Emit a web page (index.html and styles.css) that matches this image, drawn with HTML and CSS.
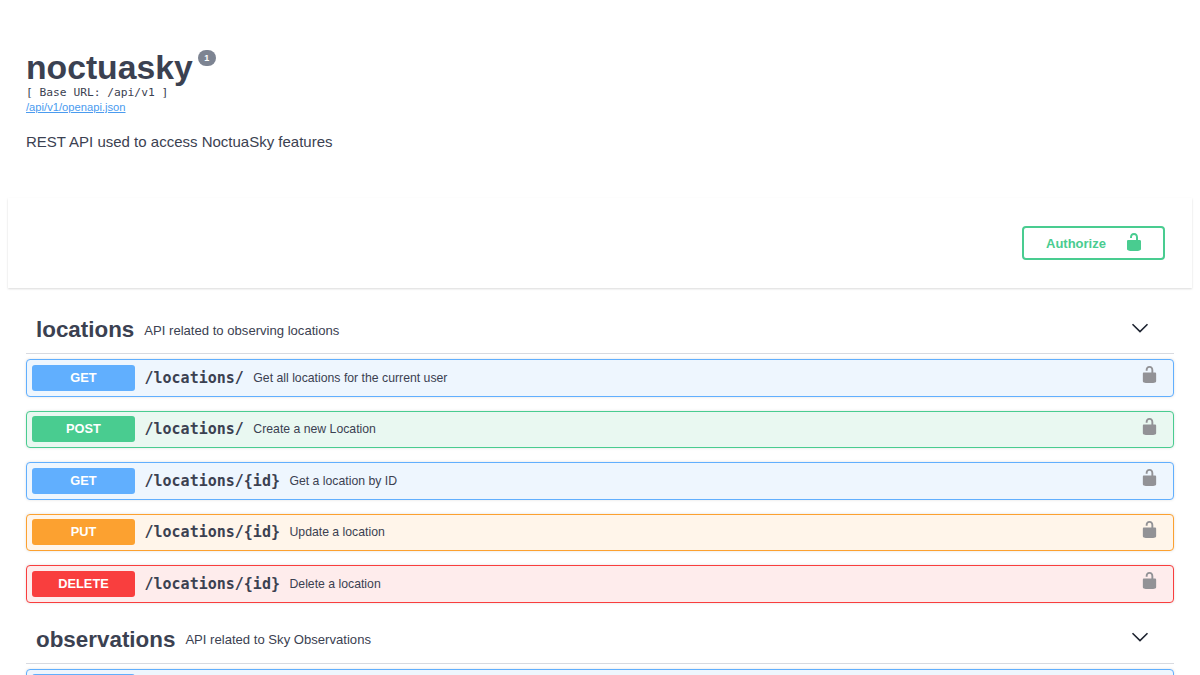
FILE: index.html
```html
<!DOCTYPE html>
<html lang="en">
<head>
<meta charset="utf-8">
<title>noctuasky</title>
<link rel="stylesheet" href="styles.css">
</head>
<body>
<svg class="defs" width="0" height="0" aria-hidden="true">
  <symbol id="lock" viewBox="0 0 20 20">
    <path d="M15.8 8H14V5.6C14 2.703 12.665 1 10 1 7.334 1 6 2.703 6 5.6V6h2v-.801C8 3.754 8.797 3 10 3c1.203 0 2 .754 2 2.199V8H4c-.553 0-1 .646-1 1.199V17c0 .549.428 1.139.951 1.307l1.197.387C5.672 18.861 6.55 19 7.1 19h5.8c.549 0 1.428-.139 1.951-.307l1.196-.387c.524-.167.953-.757.953-1.306V9.199C17 8.646 16.352 8 15.8 8z"/>
  </symbol>
</svg>
<header class="info">
  <div class="title-row"><h1 class="title">noctuasky</h1><span class="version">1</span></div>
  <div class="base-url">[ Base URL: /api/v1 ]</div>
  <a class="spec-link" href="#">/api/v1/openapi.json</a>
  <p class="description">REST API used to access NoctuaSky features</p>
</header>
<section class="scheme">
  <button class="authorize">Authorize<svg class="auth-lock"><use href="#lock"/></svg></button>
</section>
<main class="content">
  <div class="tag">
    <h2 class="tag-name">locations</h2>
    <span class="tag-desc">API related to observing locations</span>
    <svg class="chevron" viewBox="0 0 20 20"><path d="M2.5 6.2 10 13.6l7.5-7.4"/></svg>
  </div>
  <div class="op get">
    <span class="method">GET</span><span class="path">/locations/</span><span class="summary">Get all locations for the current user</span>
    <svg class="op-lock"><use href="#lock"/></svg>
  </div>
  <div class="op post">
    <span class="method">POST</span><span class="path">/locations/</span><span class="summary">Create a new Location</span>
    <svg class="op-lock"><use href="#lock"/></svg>
  </div>
  <div class="op get">
    <span class="method">GET</span><span class="path">/locations/{id}</span><span class="summary">Get a location by ID</span>
    <svg class="op-lock"><use href="#lock"/></svg>
  </div>
  <div class="op put">
    <span class="method">PUT</span><span class="path">/locations/{id}</span><span class="summary">Update a location</span>
    <svg class="op-lock"><use href="#lock"/></svg>
  </div>
  <div class="op delete">
    <span class="method">DELETE</span><span class="path">/locations/{id}</span><span class="summary">Delete a location</span>
    <svg class="op-lock"><use href="#lock"/></svg>
  </div>
  <div class="tag tag-second">
    <h2 class="tag-name">observations</h2>
    <span class="tag-desc">API related to Sky Observations</span>
    <svg class="chevron" viewBox="0 0 20 20"><path d="M2.5 6.2 10 13.6l7.5-7.4"/></svg>
  </div>
  <div class="op get"><span class="method"></span></div>
</main>
</body>
</html>
```
FILE: styles.css
```css
html, body {
  margin: 0;
  padding: 0;
  height: 675px;
  overflow: hidden;
  background: #fff;
}
body {
  font-family: "Liberation Sans", Arial, sans-serif;
  color: #3b4151;
}
.defs { display: block; height: 0; }
.info {
  padding: 49px 26px 0;
  height: 150px;
  box-sizing: border-box;
}
.title-row {
  display: flex;
  align-items: flex-start;
  height: 36px;
}
.title {
  margin: 0;
  font-size: 33.7px;
  font-weight: 700;
  line-height: 36px;
}
.version {
  margin: 1px 0 0 5px;
  width: 18px;
  height: 16px;
  border-radius: 8px;
  background: #7d8492;
  color: #fff;
  font-size: 9px;
  font-weight: 700;
  line-height: 16px;
  text-align: center;
}
.base-url {
  margin-top: 1px;
  font-family: "DejaVu Sans Mono", monospace;
  font-size: 11.25px;
  line-height: 14px;
}
.spec-link {
  display: block;
  color: #4a9bef;
  font-size: 11.2px;
  line-height: 14px;
}
.description {
  margin: 19px 0 0;
  font-size: 15px;
  line-height: 18px;
}
.scheme {
  display: flex;
  justify-content: flex-end;
  align-items: center;
  box-sizing: border-box;
  height: 90px;
  margin: 48px 8px 0;
  padding: 0 27px 0 0;
  background: #fff;
  box-shadow: 0 1px 2px rgba(0, 0, 0, .15);
}
.authorize {
  display: flex;
  align-items: center;
  justify-content: space-between;
  box-sizing: border-box;
  width: 143px;
  height: 34px;
  padding: 0 19px 0 22px;
  background: transparent;
  border: 2px solid #49cc90;
  border-radius: 4px;
  color: #49cc90;
  font-family: "Liberation Sans", Arial, sans-serif;
  font-size: 13px;
  font-weight: 700;
}
.auth-lock {
  width: 20px;
  height: 20px;
  margin-top: -2px;
  fill: #49cc90;
}
.content {
  padding: 0 26px;
}
.tag {
  display: flex;
  align-items: center;
  box-sizing: border-box;
  height: 66px;
  padding: 19px 0 0 10px;
  border-bottom: 1px solid #d8dae0;
}
.tag-second {
  height: 47px;
  padding-top: 0;
}
.tag-name {
  margin: 0;
  font-size: 22.4px;
  font-weight: 700;
  line-height: 28px;
}
.tag-desc {
  margin-left: 10px;
  font-size: 13.1px;
}
.chevron {
  width: 20px;
  height: 20px;
  margin-left: auto;
  margin-right: 24px;
  margin-bottom: 5px;
  fill: none;
  stroke: #1d2330;
  stroke-width: 1.6;
}
.op {
  display: flex;
  align-items: center;
  box-sizing: border-box;
  height: 37.5px;
  margin-top: 5px;
  margin-bottom: 14px;
  padding: 0 5px;
  border: 1px solid;
  border-radius: 4px;
  box-shadow: 0 0 3px rgba(0, 0, 0, .12);
}
.op + .op { margin-top: 0; }
.get { background: #eef6fe; border-color: #61affe; }
.post { background: #e9f8f1; border-color: #49cc90; }
.put { background: #fff5ea; border-color: #fca130; }
.delete { background: #feecec; border-color: #f93e3e; }
.method {
  flex: none;
  width: 103px;
  height: 26px;
  border-radius: 3px;
  color: #fff;
  font-size: 12.8px;
  font-weight: 700;
  line-height: 26px;
  text-align: center;
}
.get .method { background: #61affe; }
.post .method { background: #49cc90; }
.put .method { background: #fca130; }
.delete .method { background: #f93e3e; }
.path {
  margin-left: 9.5px;
  font-family: "DejaVu Sans Mono", monospace;
  font-size: 15px;
  font-weight: 700;
}
.summary {
  margin-left: 9.5px;
  font-size: 12.25px;
}
.op-lock {
  width: 19px;
  height: 19px;
  margin-left: auto;
  margin-right: 9px;
  margin-top: -6px;
  fill: #929296;
}
```
